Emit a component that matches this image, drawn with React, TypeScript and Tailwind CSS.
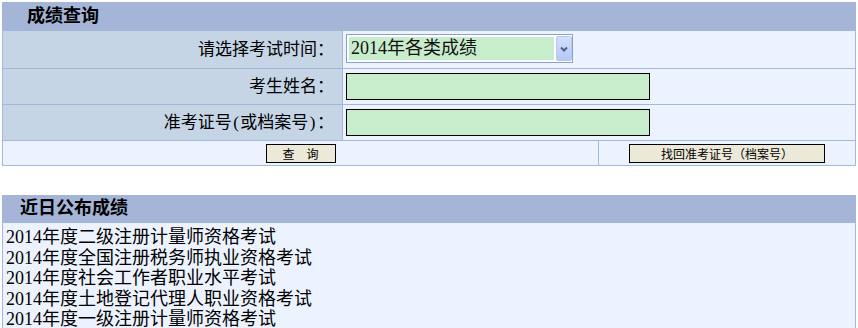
function SelectBox() {
  return (
    <div className="flex h-[29px] w-[227px] gap-[2px] border border-[#8aa2c8] bg-white py-[1px] pl-[2px]">
      <div className="my-[1px] flex-1 bg-[#c7edcc] pl-[2px] text-[18px] leading-[23px] text-[#111]">
        2014年各类成绩
      </div>
      <div className="flex w-[16px] items-center justify-center rounded-[2px] border border-[#b6c8f2] bg-gradient-to-b from-[#d3e0fd] to-[#b4c8f6]">
        <svg width="8" height="6" viewBox="0 0 8 6">
          <path d="M1 1.5 L4 4.5 L7 1.5" fill="none" stroke="#4d6185" strokeWidth="2" />
        </svg>
      </div>
    </div>
  );
}

function TextInput() {
  return <div className="h-[27px] w-[304px] border border-black bg-[#c7edcc]" />;
}

function FormRow({
  label,
  height,
  children,
  alignTop
}: {
  label: React.ReactNode;
  height: string;
  children: React.ReactNode;
  alignTop?: boolean;
}) {
  return (
    <div className={`grid grid-cols-[340px_1fr] border-b border-[#a2b8de] ${height}`}>
      <div className="flex items-center justify-end border-r border-[#a2b8de] bg-[#c5d5e6] pr-[8px] text-[17px] leading-[20px]">
        {label}
      </div>
      <div
        className={
          alignTop
            ? "flex items-start bg-[#ecf3fe] pl-[3px] pt-[3px]"
            : "flex items-center bg-[#ecf3fe] pl-[3px]"
        }
      >
        {children}
      </div>
    </div>
  );
}

const recent = [
  "2014年度二级注册计量师资格考试",
  "2014年度全国注册税务师执业资格考试",
  "2014年度社会工作者职业水平考试",
  "2014年度土地登记代理人职业资格考试",
  "2014年度一级注册计量师资格考试"
];

export default function App() {
  return (
    <div className="h-[328px] overflow-hidden bg-white pl-[2px] pt-[2px] font-['Liberation_Serif','Noto_Sans_CJK_SC',serif] text-black">
      <div className="w-[854px]">
        {/* 成绩查询 */}
        <div className="h-[29px] bg-[#a4b5d7] pl-[25px] text-[18px] font-bold leading-[28px]">成绩查询</div>
        <div className="border-x border-b border-[#a2b8de]">
          <FormRow label="请选择考试时间：" height="h-[38px]" alignTop>
            <SelectBox />
          </FormRow>
          <FormRow label="考生姓名：" height="h-[36px]">
            <TextInput />
          </FormRow>
          <FormRow
            label={
              <span>
                准考证号<span className="px-[1.5px]">(</span>或档案号<span className="px-[1.5px]">)</span>：
              </span>
            }
            height="h-[36px]"
          >
            <TextInput />
          </FormRow>
          <div className="grid h-[24px] grid-cols-[596px_1fr] bg-[#ecf3fe] font-['Noto_Sans_CJK_SC',sans-serif] text-[12px]">
            <div className="flex items-center justify-center border-r border-[#a2b8de] pt-[1px]">
              <button className="h-[19px] w-[70px] border border-black bg-[#ece9d8] leading-[17px]">查　询</button>
            </div>
            <div className="flex items-center justify-center pt-[1px]">
              <button className="h-[19px] w-[196px] border border-black bg-[#ece9d8] leading-[17px]">
                找回准考证号（档案号）
              </button>
            </div>
          </div>
        </div>

        {/* 近日公布成绩 */}
        <div className="mt-[29px] h-[28px] bg-[#a4b5d7] pl-[18px] text-[18px] font-bold leading-[27px]">近日公布成绩</div>
        <div className="border-x border-[#a2b8de] bg-[#ecf3fe] pl-[3px] pt-[4px] text-[18px] leading-[20.5px]">
          {recent.map((item) => (
            <div key={item}>{item}</div>
          ))}
        </div>
      </div>
    </div>
  );
}
